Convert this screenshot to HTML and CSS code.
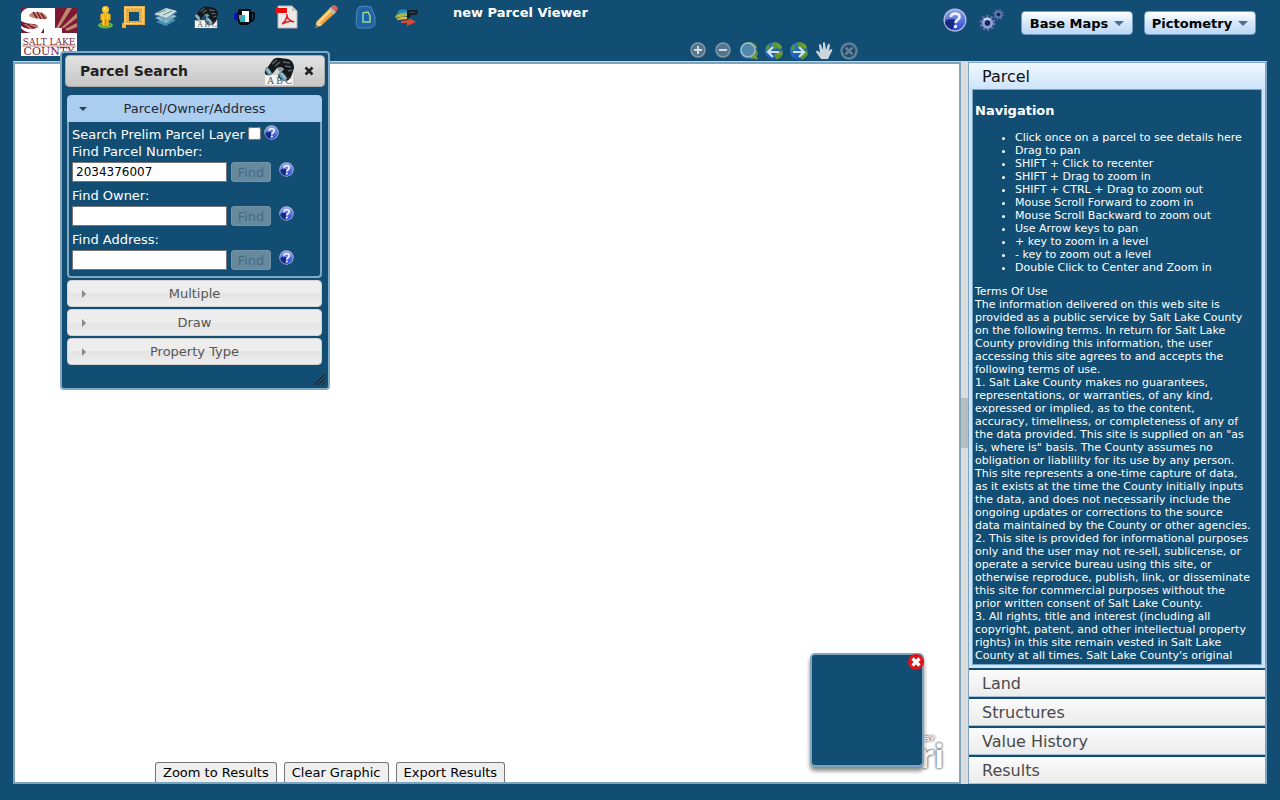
FILE: index.html
```html
<!DOCTYPE html>
<html lang="en">
<head>
<meta charset="utf-8">
<title>new Parcel Viewer</title>
<link rel="stylesheet" href="styles.css">
</head>
<body>
<svg class="defs" aria-hidden="true">
  <defs>
    <linearGradient id="gBlue" x1="0" y1="0" x2="0" y2="1"><stop offset="0" stop-color="#8ea2e4"/><stop offset="1" stop-color="#2a48d8"/></linearGradient>
    <linearGradient id="gGlobe" x1="0" y1="0" x2="1" y2="1"><stop offset="0" stop-color="#2f86d8"/><stop offset="1" stop-color="#123e9a"/></linearGradient>
    <symbol id="help" viewBox="0 0 24 24">
      <circle cx="12" cy="12" r="11.5" fill="#b9bfd8"/>
      <circle cx="12" cy="12" r="10.3" fill="url(#gBlue)"/>
      <path d="M2 14C4 10 8 12 11 11C13 14 11 18 9 21.500C5 20.500 2 17 2 14Z" fill="#142a86"/>
      <path d="M8 9C8 4.500 16.500 4.500 16.500 9C16.500 12 12.500 12 12.500 15" fill="none" stroke="#eef0fb" stroke-width="2.800"/>
      <circle cx="12.500" cy="18.500" r="1.700" fill="#eef0fb"/>
    </symbol>
    <symbol id="glasses" viewBox="0 0 30 28">
      <rect x="1" y="18" width="28" height="10" fill="#f4f4f4"/>
      <path d="M1 14L8 4Q11 0 16 1L24 2Q30 4 30 11L27 20Q24 25 20 24Q15 23 14 18L20 12L17 10L13 11L9 16Q6 19 3 18Q0 17 1 14Z" fill="#15191b"/>
      <path d="M8 7L13 3M11 9L16 5M19 5L26 6M21 9L27 10M24 14L28 13" stroke="#59646a" stroke-width="1.500"/>
      <path d="M13 11L17 10L19 12L16 15Z" fill="#8a9296"/>
      <ellipse cx="4.500" cy="14.500" rx="2.300" ry="4.500" transform="rotate(-35 4.500 14.500)" fill="#6f99ad"/>
      <ellipse cx="19" cy="19.500" rx="2.700" ry="5.500" transform="rotate(-40 19 19.500)" fill="#6fa0b7"/>
      <path d="M17 16L22 22M3 12L6 16" stroke="#cfe2ea"/>
    </symbol>
    <symbol id="globe" viewBox="0 0 20 20">
      <circle cx="10" cy="10" r="9" fill="url(#gGlobe)"/>
      <path d="M9 1Q16 1 18 6L16 9L13 7L10 8L8 5ZM12 12L18 9L19 13Q16 19 12 18L10 14ZM2 6L5 3L6 7L3 10Z" fill="#5d9433"/>
      <path d="M13 3L17 7M14 14L17 11" stroke="#95b23a"/>
    </symbol>
  </defs>
</svg>

<header class="header">
  <svg class="logo" viewBox="0 0 56 48" role="img" aria-label="Salt Lake County">
    <rect width="56" height="48" fill="#fff"/>
    <path d="M34 0H56V25H41V20H34Z" fill="#7d1935"/>
    <path d="M35 20L46 0H51L38 20ZM40 20L56 5V10L43 20ZM44 21L56 15V19L46 23Z" fill="#bd876d"/>
    <path d="M0 0H7Q2 1 0 6Z" fill="#7d1935"/>
    <path d="M8 8Q9 4 16 4Q23 4 26 9V11H22Q12 11 8 8Z" fill="#bd876d"/>
    <path d="M12 4L16 10M16 4L20 11M20 5L24 11" stroke="#7d1935" stroke-width="1.500"/>
    <path d="M0 13Q5 16 13 16Q17 17 17 19Q15 21 8 21Q3 20 0 18Z" fill="#7d1935"/>
    <path d="M10 16L17 18L16 20L8 17ZM5 16L12 21H9L3 16Z" fill="#bd876d"/>
    <path d="M0 20V25H10Q3 24 0 20ZM20 25L23 20V25Z" fill="#7d1935"/>
    <path d="M1 38H55" stroke="#b4806b"/>
    <text x="28" y="37" text-anchor="middle" class="logo-line1">SALT LAKE</text>
    <text x="28" y="47" text-anchor="middle" class="logo-line2">COUNTY</text>
  </svg>
  <div class="header-main">
    <div class="header-row">
      <nav class="toolbar" aria-label="Tools">
        <button class="icon-btn narrow" aria-label="Street view"><svg viewBox="0 0 17 26"><ellipse cx="8.500" cy="22" rx="8" ry="3.500" fill="#61b944"/><ellipse cx="8.500" cy="21.500" rx="5" ry="2" fill="#3b8b2b"/><path d="M3 10Q8 6 14 10V17L12 16V23H5V16L3 17Z" fill="#f4b416"/><path d="M6 11V21M11 11V15" stroke="#ffdd5a"/><path d="M8.500 15V22" stroke="#bd7811"/><circle cx="8.500" cy="5" r="3.800" fill="#f9c72b"/><circle cx="7.500" cy="4" r="1.300" fill="#ffe98b"/></svg></button>
        <button class="icon-btn close" aria-label="Measure"><svg viewBox="0 0 24 24"><path d="M2 1H23V20H4V23H0V18H2ZM7 7V16H17V7Z" fill="#edb14c" fill-rule="evenodd"/><path d="M1 6H23M6 1V22M18 1V20M1 17H23" stroke="#c98634" stroke-dasharray="1 2"/><path d="M3 2.500H21V18.500H3Z" fill="none" stroke="#ffda82"/></svg></button>
        <button class="icon-btn" aria-label="Layers"><svg viewBox="0 0 24 20"><path d="M2 15L13 10L22 13L12 19Z" fill="#3f92bd"/><path d="M1 11L13 6L23 9L12 16Z" fill="#8fbdd2"/><path d="M0 7L12 1L23 4L13 11Z" fill="#cddde3"/><path d="M4 6L12 3M9 8L18 4M7 12L11 14M13 13L19 11" stroke="#6b9c80" stroke-width="1.200"/><path d="M1 8L12 12L23 5" fill="none" stroke="#5787a1"/></svg></button>
        <button class="icon-btn" aria-label="Search"><svg viewBox="0 0 30 28"><use href="#glasses"/><text x="4" y="27" class="abc">A B C</text></svg></button>
        <button class="icon-btn" aria-label="Identify"><svg viewBox="0 0 24 22"><path d="M0 8L5 5V16L0 13Z" fill="#0715b0"/><path d="M5 3H17V6Q22 5 21 9V12Q20 16 17 16L14 19H6L4 17V5Z" fill="#050b10"/><path d="M8 5H15V16H8Z" fill="#fff"/><path d="M5 9H11V16H6Z" fill="#20b8bf"/><path d="M5 9H8V13H5Z" fill="#8a9296"/><path d="M18 8H19V13H18Z" fill="#124e73"/></svg></button>
        <button class="icon-btn" aria-label="Print to PDF"><svg viewBox="0 0 24 24"><path d="M4 1H18L23 6V23H4Z" fill="#e9e9e9" stroke="#b8b8b8"/><path d="M18 1V6H23Z" fill="#c5c5c5"/><path d="M1 3H13V8H1Z" fill="#e60b0b"/><path d="M8 19Q12 16 13 11V9V11Q14 15 20 17Q15 15 8 19Z" fill="none" stroke="#e12121" stroke-width="1.500"/></svg></button>
        <button class="icon-btn" aria-label="Draw"><svg viewBox="0 0 24 24"><path d="M1 23L3 16L17 2L22 7L8 20Z" fill="#e9aa45"/><path d="M5 17L18 4" stroke="#ffdc91" stroke-width="2"/><path d="M8 20L21 8" stroke="#a96a28"/><path d="M15 4L20 9L22 7L17 2Z" fill="#b9bdc0"/><path d="M17 2L19 0Q23 0 24 4L22 7Z" fill="#d9605c"/><path d="M1 23L3 16L8 20Z" fill="#efd2a0"/><path d="M1 23L2 20L4 21Z" fill="#302d28"/></svg></button>
        <button class="icon-btn" aria-label="Select parcel"><svg viewBox="0 0 22 24"><path d="M4 2Q10 0 16 2L20 12V20Q18 22 15 23H3L1 19L2 6Z" fill="#1e62a8" stroke="#4f8cba"/><path d="M8 8L13 7L15 11V17H8Z" fill="none" stroke="#a8d77c" stroke-width="1.500"/><path d="M8 8V17" stroke="#49c7d3"/></svg></button>
        <button class="icon-btn" aria-label="Directions"><svg viewBox="0 0 24 18"><path d="M4 3Q8 0 13 2V5L3 6Z" fill="#2489bb"/><path d="M2 7Q8 4 13 5V8L1 10Z" fill="#a6b84a"/><path d="M2 11Q8 8 13 9V11L4 12Z" fill="#e4b83f"/><path d="M13 2H24L23 7H17L16 10H13Z" fill="#15202a"/><path d="M16 4H21V5H16Z" fill="#3b5263"/><path d="M7 13L15 12V10L22 14L13 18V15H7Z" fill="#d9492f"/></svg></button>
      </nav>
      <h1 class="app-title">new Parcel Viewer</h1>
      <div class="actions">
        <button class="icon-btn" aria-label="Help"><svg viewBox="0 0 24 24"><use href="#help"/></svg></button>
        <button class="icon-btn gears" aria-label="Settings"><svg viewBox="0 0 26 24"><circle cx="8.500" cy="15" r="6.500" fill="none" stroke="#5a6cae" stroke-width="3" stroke-dasharray="2.300 1.780"/><circle cx="8.500" cy="15" r="4.200" fill="none" stroke="#8f9ed2" stroke-width="3"/><path d="M5 12Q8 9 11 12" fill="none" stroke="#e2e7f8" stroke-width="1.500"/><circle cx="8.500" cy="15" r="2.600" fill="#14265c"/><circle cx="19.500" cy="6.500" r="4.500" fill="none" stroke="#4a5ea0" stroke-width="2.500" stroke-dasharray="1.700 1.840"/><circle cx="19.500" cy="6.500" r="3" fill="none" stroke="#6577b4" stroke-width="2"/><circle cx="19.500" cy="6.500" r="1.700" fill="#14265c"/></svg></button>
        <button class="drop-btn">Base Maps <span class="caret"></span></button>
        <button class="drop-btn">Pictometry <span class="caret"></span></button>
      </div>
    </div>
    <div class="map-tools" role="toolbar" aria-label="Map navigation">
      <button class="tool-btn" aria-label="Zoom in"><svg viewBox="0 0 20 20"><path d="M14 14L17 17" stroke="#2b4a61" stroke-width="3"/><circle cx="9" cy="9" r="7" fill="#537590" stroke="#8599a8" stroke-width="1.500"/><path d="M9 5V13M5 9H13" stroke="#d5dde3" stroke-width="2"/></svg></button>
      <button class="tool-btn" aria-label="Zoom out"><svg viewBox="0 0 20 20"><path d="M14 14L17 17" stroke="#2b4a61" stroke-width="3"/><circle cx="9" cy="9" r="7" fill="#537590" stroke="#8599a8" stroke-width="1.500"/><path d="M5 9H13" stroke="#d5dde3" stroke-width="2"/></svg></button>
      <button class="tool-btn" aria-label="Full extent"><svg viewBox="0 0 20 20"><use href="#globe"/><circle cx="9" cy="9" r="7" fill="#4e89ad" stroke="#a6bdc7" stroke-width="1.500"/><path d="M14 14L18 18" stroke="#8f9d47" stroke-width="2"/></svg></button>
      <button class="tool-btn" aria-label="Previous extent"><svg viewBox="0 0 20 20"><use href="#globe"/><path d="M15 11H4M9 6L4 11L9 16" fill="none" stroke="#d3e2ea" stroke-width="2.200"/></svg></button>
      <button class="tool-btn" aria-label="Next extent"><svg viewBox="0 0 20 20"><use href="#globe"/><path d="M4 11H15M10 6L15 11L10 16" fill="none" stroke="#d3e2ea" stroke-width="2.200"/></svg></button>
      <button class="tool-btn" aria-label="Pan"><svg viewBox="0 0 20 20"><path d="M7 18L2 11Q2 9 4 10L6 12L5 4Q6 2 7 4L9 9V2Q10 0 11 2L12 9L14 3Q15 2 16 4L15 10L17 8Q19 8 18 10L14 18Z" fill="#cbd5dc"/></svg></button>
      <button class="tool-btn" aria-label="Deactivate"><svg viewBox="0 0 20 20"><circle cx="10" cy="10" r="7.500" fill="#164b6d" stroke="#647f92" stroke-width="2.500"/><path d="M6.500 6.500L13.500 13.500M13.500 6.500L6.500 13.500" stroke="#647f92" stroke-width="2.500"/></svg></button>
    </div>
  </div>
</header>

<main class="workspace">
  <section class="map" aria-label="Map">
    <div class="powered"><span class="powered-by">BY</span><span class="powered-name">ri</span></div>
    <div class="overview">
      <button class="overview-close" aria-label="Close overview"><svg viewBox="0 0 16 16"><circle cx="8" cy="8" r="8" fill="#d9141c"/><path d="M4.500 4.500L11.500 11.500M11.500 4.500L4.500 11.500" stroke="#fff" stroke-width="3.200"/></svg></button>
    </div>
    <div class="map-actions">
      <button>Zoom to Results</button>
      <button>Clear Graphic</button>
      <button>Export Results</button>
    </div>
  </section>
  <div class="splitter"><span class="splitter-thumb"></span></div>
  <aside class="sidebar">
    <button class="side-title active">Parcel</button>
    <div class="side-frame">
      <div class="side-content">
        <h3>Navigation</h3>
        <ul>
          <li>Click once on a parcel to see details here</li>
          <li>Drag to pan</li>
          <li>SHIFT + Click to recenter</li>
          <li>SHIFT + Drag to zoom in</li>
          <li>SHIFT + CTRL + Drag to zoom out</li>
          <li>Mouse Scroll Forward to zoom in</li>
          <li>Mouse Scroll Backward to zoom out</li>
          <li>Use Arrow keys to pan</li>
          <li>+ key to zoom in a level</li>
          <li>- key to zoom out a level</li>
          <li>Double Click to Center and Zoom in</li>
        </ul>
        <div>Terms Of Use</div>
        <div>The information delivered on this web site is provided as a public service by Salt Lake County on the following terms. In return for Salt Lake County providing this information, the user accessing this site agrees to and accepts the following terms of use.</div>
        <div>1. Salt Lake County makes no guarantees, representations, or warranties, of any kind, expressed or implied, as to the content, accuracy, timeliness, or completeness of any of the data provided. This site is supplied on an "as is, where is" basis. The County assumes no obligation or liablility for its use by any person. This site represents a one-time capture of data, as it exists at the time the County initially inputs the data, and does not necessarily include the ongoing updates or corrections to the source data maintained by the County or other agencies.</div>
        <div>2. This site is provided for informational purposes only and the user may not re-sell, sublicense, or operate a service bureau using this site, or otherwise reproduce, publish, link, or disseminate this site for commercial purposes without the prior written consent of Salt Lake County.</div>
        <div>3. All rights, title and interest (including all copyright, patent, and other intellectual property rights) in this site remain vested in Salt Lake County at all times. Salt Lake County's original</div>
      </div>
    </div>
    <button class="side-title">Land</button>
    <button class="side-title">Structures</button>
    <button class="side-title">Value History</button>
    <button class="side-title">Results</button>
  </aside>
</main>

<section class="dialog" role="dialog" aria-labelledby="dialog-title">
  <div class="dialog-bar">
    <h2 id="dialog-title">Parcel Search</h2>
    <svg class="dialog-icon" viewBox="0 0 30 28" aria-hidden="true"><use href="#glasses"/><text x="3" y="27" class="abc">A B C</text></svg>
    <button class="dialog-close" aria-label="Close"><svg viewBox="0 0 10 10"><path d="M1.500 1.500L8.500 8.500M8.500 1.500L1.500 8.500" stroke="#222" stroke-width="2.600"/></svg></button>
  </div>
  <div class="accordion">
    <div class="acc-open">
      <button class="acc-title active"><span class="tri down"></span>Parcel/Owner/Address</button>
      <form class="acc-body">
        <div class="check-row"><label for="prelim">Search Prelim Parcel Layer</label><input type="checkbox" id="prelim"><svg class="help-sm" viewBox="0 0 24 24"><use href="#help"/></svg></div>
        <label for="num">Find Parcel Number:</label>
        <div class="field"><input type="text" id="num" value="2034376007"><button type="button" disabled>Find</button><svg class="help-sm" viewBox="0 0 24 24"><use href="#help"/></svg></div>
        <label for="owner">Find Owner:</label>
        <div class="field"><input type="text" id="owner"><button type="button" disabled>Find</button><svg class="help-sm" viewBox="0 0 24 24"><use href="#help"/></svg></div>
        <label for="address">Find Address:</label>
        <div class="field"><input type="text" id="address"><button type="button" disabled>Find</button><svg class="help-sm" viewBox="0 0 24 24"><use href="#help"/></svg></div>
      </form>
    </div>
    <button class="acc-title"><span class="tri"></span>Multiple</button>
    <button class="acc-title"><span class="tri"></span>Draw</button>
    <button class="acc-title"><span class="tri"></span>Property Type</button>
  </div>
  <svg class="resize" viewBox="0 0 12 12" aria-hidden="true"><path d="M0 11L11 0M4 11L11 4M8 11L11 8" stroke="#101820"/></svg>
</section>
</body>
</html>
```
FILE: styles.css
```css
* { box-sizing: border-box; }

body {
  margin: 0;
  height: 100vh;
  display: flex;
  flex-direction: column;
  background: #124e73;
  color: #fff;
  font: 13px/17px "DejaVu Sans", Verdana, sans-serif;
  overflow: hidden;
}

button, input { font: inherit; }
button { margin: 0; padding: 0; cursor: pointer; }
h1, h2, h3 { margin: 0; }
svg { display: block; }
.defs { position: absolute; width: 0; height: 0; }

/* Header */
.header {
  display: flex;
  flex: none;
  height: 61px;
  padding: 0 24px 0 21px;
}
.logo { flex: none; width: 56px; height: 48px; margin-top: 8px; }
.logo text { font-family: "DejaVu Serif", serif; fill: #7d1935; }
.logo-line1 { font-size: 9px; }
.logo-line2 { font-size: 11px; }
.abc { font: 10px "Liberation Serif", serif; fill: #555; }

.header-main { flex: 1; display: flex; flex-direction: column; padding-left: 15px; }
.header-row { display: flex; align-items: flex-start; height: 41px; }
.toolbar { display: flex; align-items: center; gap: 16px; height: 34px; }
.icon-btn { width: 24px; height: 24px; border: 0; background: none; }
.icon-btn svg { width: 100%; height: 100%; }
.icon-btn.narrow { margin-left: 5px; margin-right: -8px; width: 17px; }
.icon-btn.close { margin-right: -8px; }
.app-title { margin: 4px 0 0 35px; font-size: 13px; line-height: 17px; }

.actions { display: flex; align-items: flex-start; margin-left: auto; padding-top: 8px; }
.icon-btn.gears { margin: 0 16px 0 12px; width: 26px; }
.drop-btn {
  display: flex;
  align-items: center;
  justify-content: center;
  gap: 6px;
  width: 112px;
  height: 24px;
  margin-top: 3px;
  border: 1px solid #759dc0;
  border-radius: 4px;
  background: linear-gradient(#fff, #d5e7fa 50%, #bcd8f4);
  color: #000;
  font-weight: bold;
}
.drop-btn + .drop-btn { margin-left: 11px; }
.caret { border: 5px solid transparent; border-top: 5px solid #4c6f92; border-bottom: 0; }

.map-tools { display: flex; justify-content: flex-end; gap: 5px; padding-right: 397px; }
.tool-btn { width: 20px; height: 20px; border: 0; background: none; }

/* Workspace */
.workspace {
  flex: 1;
  min-height: 0;
  display: flex;
  margin: 0 13px 16px;
  border-top: 1px solid #b9d4ea;
}
.map {
  position: relative;
  flex: 1;
  display: flex;
  flex-direction: column;
  justify-content: flex-end;
  border: 2px solid #7fa5bd;
  background: #fff;
}
.map-actions { display: flex; gap: 7px; margin-left: 140px; }
.map-actions button {
  height: 20px;
  padding: 0 7px;
  border: 1px solid #767676;
  border-bottom: 0;
  border-radius: 3px 3px 0 0;
  background: #efefef;
  color: #000;
}
.overview {
  position: absolute;
  right: 35px;
  bottom: 15px;
  width: 114px;
  height: 114px;
  border: 2px solid #7fa5bd;
  border-radius: 5px;
  background: #124e73;
  box-shadow: 0 4px 4px #888;
}
.overview-close { position: absolute; top: -1px; right: -2px; width: 16px; height: 16px; border: 0; background: none; }
.powered {
  position: absolute;
  right: 15px;
  bottom: 13px;
  display: flex;
  flex-direction: column;
  color: #fff;
  text-shadow: 0 0 2px #666, 0 0 3px #777, 0 0 3px #999;
}
.powered-by { margin-left: 4px; font: bold 8px/8px "Liberation Sans", sans-serif; }
.powered-name { font: bold 32px/26px "Open Sans", sans-serif; }

.splitter { display: flex; align-items: center; width: 7px; background: #dcdcdc; }
.splitter-thumb { width: 7px; height: 50px; background: #b9bcbe; }

/* Sidebar accordion */
.sidebar {
  display: flex;
  flex-direction: column;
  gap: 2px;
  width: 299px;
  border: solid #7fa5c5;
  border-width: 1px 2px 0 1px;
}
.side-title {
  flex: none;
  height: 27px;
  padding: 0 13px;
  border: 0;
  border-bottom: 1px solid #a5bfd6;
  background: linear-gradient(#fafafa, #ececec);
  color: #494949;
  font-size: 16px;
  line-height: 28px;
  text-align: left;
}
.side-title.active {
  margin-bottom: -2px;
  height: 26px;
  border: 0;
  background: linear-gradient(#f0f8ff, #cde4fa);
  color: #111;
}
.side-frame { flex: 1; min-height: 0; padding: 0 3px 3px; background: #cde4fa; }
.side-content {
  height: 100%;
  overflow: hidden;
  border: 1px solid #7fa5c5;
  padding: 12px 10px 0 2px;
  background: #124e73;
  font-size: 11px;
  line-height: 13px;
}
.side-content h3 { font-size: 13px; line-height: 17px; }
.side-content ul { margin: 12px 0 11px; padding-left: 40px; }

/* Floating search dialog */
.dialog {
  position: absolute;
  left: 60px;
  top: 51px;
  width: 270px;
  padding: 2px 3px 23px;
  border: 2px solid #7fa9c4;
  border-radius: 4px;
  background: #124e73;
}
.dialog-bar {
  display: flex;
  align-items: center;
  height: 32px;
  padding: 0 10px 0 14px;
  border: 1px solid #aaa;
  border-radius: 4px;
  background: linear-gradient(#e2e2e2, #c6c6c6);
  color: #222;
}
.dialog-bar h2 { flex: 1; font-size: 14px; line-height: 18px; }
.dialog-icon { width: 30px; height: 28px; margin-right: 10px; }
.dialog-close { width: 10px; height: 10px; border: 0; background: none; }

.accordion { display: flex; flex-direction: column; gap: 2px; padding: 8px 3px 0 2px; }
.acc-title {
  position: relative;
  width: 100%;
  height: 27px;
  border: 1px solid #d3d3d3;
  border-radius: 4px;
  background: linear-gradient(#ededed 50%, #e4e4e4 50%, #ededed);
  color: #555;
  text-align: center;
}
.acc-title.active {
  display: block;
  border-color: #a9cbf0;
  border-radius: 4px 4px 0 0;
  background: #abcdef;
  color: #212a33;
}
.tri {
  position: absolute;
  left: 14px;
  top: 9px;
  border: 4px solid transparent;
  border-left: 4px solid #888;
  border-right: 0;
}
.tri.down {
  left: 11px;
  top: 11px;
  border: 4px solid transparent;
  border-top: 4px solid #2c4258;
  border-bottom: 0;
}
.acc-body {
  padding: 4px 3px 1px;
  border: 2px solid #7fa9c4;
  border-top: 0;
  border-radius: 0 0 4px 4px;
}
.acc-body label { display: block; }
.check-row { display: flex; align-items: center; height: 17px; }
.check-row input { width: 13px; height: 13px; margin: 0 3px 3px; }
.help-sm { width: 15px; height: 15px; margin-bottom: 5px; }
.field { display: flex; align-items: center; margin: 2px 0 5px; }
.field input {
  width: 155px;
  height: 20px;
  padding: 1px 3px;
  border: 1px solid #767676;
  background: #fff;
  color: #000;
  font-size: 12px;
}
.field button {
  width: 40px;
  height: 20px;
  margin: 0 8px 0 4px;
  border: 1px solid #7694a6;
  border-radius: 3px;
  background: #67899e;
  color: #446b82;
}
.resize { position: absolute; right: 2px; bottom: 2px; width: 12px; height: 12px; }
```
